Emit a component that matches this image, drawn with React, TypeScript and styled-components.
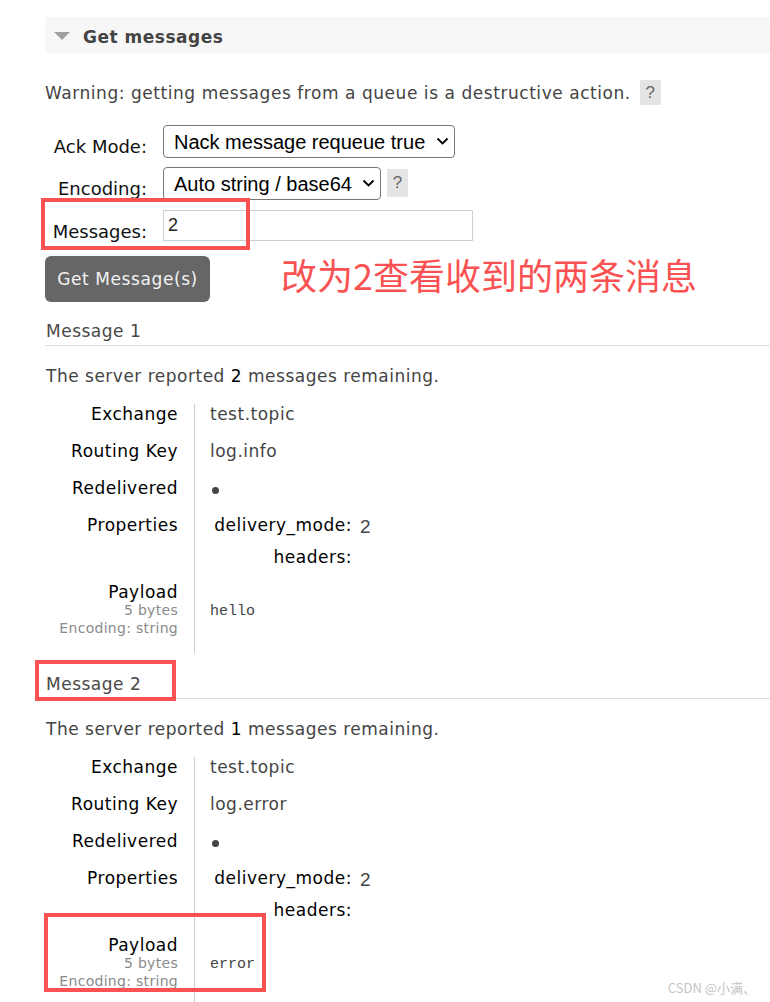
import React from "react";
import styled, { createGlobalStyle } from "styled-components";

const GlobalStyle = createGlobalStyle`
  html, body { margin: 0; padding: 0; background: #fff; }
  body { font-family: "DejaVu Sans", Verdana, sans-serif; color: #444; letter-spacing: 0.5px; }
`;

const Page = styled.div`
  position: relative;
  width: 770px;
  height: 1002px;
  overflow: hidden;
  padding: 17px 0 0 45px;
  box-sizing: border-box;
`;

const SectionHeader = styled.div`
  display: flex;
  align-items: center;
  height: 36px;
  background: #f7f7f7;
  padding-left: 9px;
`;

const Triangle = styled.span`
  width: 0;
  height: 0;
  border-left: 8px solid transparent;
  border-right: 8px solid transparent;
  border-top: 8px solid #a0a0a0;
  margin-top: 2px;
`;

const SectionTitle = styled.h2`
  margin: 3px 0 0 13px;
  font-size: 17px;
  font-weight: bold;
  color: #444;
`;

const WarningRow = styled.div`
  display: flex;
  align-items: center;
  gap: 9px;
  margin-top: 27px;
  height: 25px;
  font-size: 17px;
  letter-spacing: 0.55px;
  color: #444;
`;

const Help = styled.span`
  display: inline-flex;
  align-items: center;
  justify-content: center;
  width: 21px;
  height: 25px;
  background: #e4e4e4;
  color: #666;
  font-family: "Liberation Sans", Arial, sans-serif;
  font-size: 17px;
  letter-spacing: 0;
`;

const Form = styled.div`
  display: flex;
  flex-direction: column;
  margin-top: 20px;
`;

const FormRow = styled.div<{ $h: number }>`
  display: flex;
  align-items: flex-start;
  height: ${(p) => p.$h}px;
`;

const FormLabel = styled.label<{ $pt: number }>`
  width: 102px;
  margin-right: 16px;
  text-align: right;
  font-size: 18px;
  line-height: 20px;
  letter-spacing: 0;
  padding-top: ${(p) => p.$pt}px;
  color: #111;
`;

const SelectWrap = styled.div<{ $w: number }>`
  position: relative;
  width: ${(p) => p.$w}px;
  height: 33px;
`;

const Select = styled.select`
  appearance: none;
  -webkit-appearance: none;
  width: 100%;
  height: 100%;
  box-sizing: border-box;
  border: 1px solid #767676;
  border-radius: 4px;
  background: #fff;
  padding: 0 28px 0 10px;
  font-family: "Liberation Sans", Arial, sans-serif;
  font-size: 20px;
  letter-spacing: 0;
  color: #000;
  outline: none;
`;

const Chevron = styled.svg`
  position: absolute;
  right: 6px;
  top: 11px;
  pointer-events: none;
`;

const InlineHelp = styled(Help)`
  margin-left: 6px;
  margin-top: 2px;
  height: 28px;
`;

const Input = styled.input`
  width: 310px;
  height: 31px;
  box-sizing: border-box;
  border: 1px solid #cfcfcf;
  padding: 0 2px 1px 4px;
  font-family: "Liberation Sans", Arial, sans-serif;
  font-size: 18px;
  letter-spacing: 0;
  color: #222;
  outline: none;
`;

const ButtonRow = styled.div`
  display: flex;
  align-items: center;
  margin-top: 15px;
`;

const Button = styled.button`
  width: 165px;
  height: 46px;
  border: none;
  border-radius: 6px;
  background: #666;
  color: #f2f2f2;
  font-family: "DejaVu Sans", Verdana, sans-serif;
  font-size: 17px;
  letter-spacing: 0.6px;
  padding: 0;
`;

const Note = styled.span`
  margin-left: 71px;
  font-family: "Noto Sans CJK SC", sans-serif;
  font-size: 36px;
  line-height: 44px;
  letter-spacing: 0;
  color: #fa5252;
  margin-top: -10px;
`;

const MessageBlock = styled.section<{ $mt: number }>`
  margin-top: ${(p) => p.$mt}px;
`;

const MessageTitle = styled.h3`
  margin: 0;
  font-size: 17px;
  font-weight: normal;
  line-height: 20px;
  padding: 0 0 4px 1px;
  color: #484848;
  border-bottom: 1px solid #dcdcdc;
`;

const Remaining = styled.p`
  margin: 20px 0 0 1px;
  font-size: 17px;
  line-height: 20px;
  color: #444;
`;

const Strong = styled.span`
  color: #000;
`;

const Details = styled.div`
  display: grid;
  grid-template-columns: 150px auto;
  margin-top: 18px;
`;

const Th = styled.div<{ $pb: number }>`
  box-sizing: border-box;
  padding: 0 16px ${(p) => p.$pb}px 0;
  border-right: 1px solid #cccccc;
  text-align: right;
  font-size: 17px;
  line-height: 20px;
  color: #000;
`;

const Td = styled.div`
  padding-left: 15px;
  font-size: 17px;
  line-height: 20px;
  color: #444;
`;

const Sub = styled.div`
  font-size: 14px;
  line-height: 17.5px;
  letter-spacing: 0.3px;
  color: #8a8a8a;
`;

const Dot = styled.span`
  display: inline-block;
  width: 7px;
  height: 7px;
  border-radius: 50%;
  background: #444;
  margin: 9px 0 0 2px;
`;

const Props = styled.div`
  display: grid;
  grid-template-columns: 139px auto;
  column-gap: 9px;
  row-gap: 10px;
  padding-left: 2px;
`;

const PropKey = styled.div`
  text-align: right;
  color: #000;
  font-size: 17px;
  line-height: 20px;
  margin-right: -1px;
`;

const PropVal = styled.div`
  font-family: "Liberation Sans", Arial, sans-serif;
  font-size: 19px;
  line-height: 20px;
  letter-spacing: 0;
  color: #444;
  padding-top: 2px;
`;

const Payload = styled.pre`
  margin: 0;
  padding-top: 21px;
  font-family: "Liberation Mono", "Courier New", monospace;
  font-size: 15px;
  line-height: 18px;
  letter-spacing: 0;
  color: #444;
`;

const Highlight = styled.div<{ $x: number; $y: number; $w: number; $h: number }>`
  position: absolute;
  left: ${(p) => p.$x}px;
  top: ${(p) => p.$y}px;
  width: ${(p) => p.$w}px;
  height: ${(p) => p.$h}px;
  box-sizing: border-box;
  border: 4px solid #fa5252;
  pointer-events: none;
`;

const Watermark = styled.div`
  position: absolute;
  right: 14px;
  bottom: 5px;
  font-family: "Noto Sans CJK SC", sans-serif;
  font-size: 13px;
  letter-spacing: 0;
  color: #c4c4c4;
`;

const ChevronIcon = () => (
  <Chevron width="13" height="10" viewBox="0 0 13 10">
    <path d="M1.5 2.5 L6.5 7.5 L11.5 2.5" fill="none" stroke="#000" strokeWidth="1.8" />
  </Chevron>
);

type Msg = { remaining: number; exchange: string; key: string; payload: string };

const messages: Msg[] = [
  { remaining: 2, exchange: "test.topic", key: "log.info", payload: "hello" },
  { remaining: 1, exchange: "test.topic", key: "log.error", payload: "error" },
];

const Message = ({ index, m }: { index: number; m: Msg }) => (
  <MessageBlock $mt={index === 0 ? 19 : 21}>
    <MessageTitle>Message {index + 1}</MessageTitle>
    <Remaining>
      The server reported <Strong>{m.remaining}</Strong> messages remaining.
    </Remaining>
    <Details>
      <Th $pb={17}>Exchange</Th>
      <Td>{m.exchange}</Td>
      <Th $pb={17}>Routing Key</Th>
      <Td>{m.key}</Td>
      <Th $pb={17}>Redelivered</Th>
      <Td>
        <Dot />
      </Td>
      <Th $pb={47}>Properties</Th>
      <Td>
        <Props>
          <PropKey>delivery_mode:</PropKey>
          <PropVal>2</PropVal>
          <PropKey>headers:</PropKey>
          <PropVal />
        </Props>
      </Td>
      <Th $pb={16}>
        Payload
        <Sub>5 bytes</Sub>
        <Sub>Encoding: string</Sub>
      </Th>
      <Td>
        <Payload>{m.payload}</Payload>
      </Td>
    </Details>
  </MessageBlock>
);

export default function App() {
  return (
    <Page>
      <GlobalStyle />
      <SectionHeader>
        <Triangle />
        <SectionTitle>Get messages</SectionTitle>
      </SectionHeader>
      <WarningRow>
        <span>Warning: getting messages from a queue is a destructive action.</span>
        <Help>?</Help>
      </WarningRow>
      <Form>
        <FormRow $h={42}>
          <FormLabel $pt={12}>Ack Mode:</FormLabel>
          <SelectWrap $w={292}>
            <Select defaultValue="nack">
              <option value="nack">Nack message requeue true</option>
              <option value="ack">Automatic ack</option>
            </Select>
            <ChevronIcon />
          </SelectWrap>
        </FormRow>
        <FormRow $h={43}>
          <FormLabel $pt={12}>Encoding:</FormLabel>
          <SelectWrap $w={218}>
            <Select defaultValue="auto">
              <option value="auto">Auto string / base64</option>
              <option value="b64">base64</option>
            </Select>
            <ChevronIcon />
          </SelectWrap>
          <InlineHelp>?</InlineHelp>
        </FormRow>
        <FormRow $h={31}>
          <FormLabel $pt={12}>Messages:</FormLabel>
          <Input defaultValue="2" />
        </FormRow>
      </Form>
      <ButtonRow>
        <Button>Get Message(s)</Button>
        <Note>改为2查看收到的两条消息</Note>
      </ButtonRow>
      {messages.map((m, i) => (
        <Message key={i} index={i} m={m} />
      ))}
      <Highlight $x={41} $y={198} $w={209} $h={52} />
      <Highlight $x={35} $y={660} $w={141} $h={41} />
      <Highlight $x={44} $y={913} $w={222} $h={79} />
      <Watermark>CSDN @小满、</Watermark>
    </Page>
  );
}
